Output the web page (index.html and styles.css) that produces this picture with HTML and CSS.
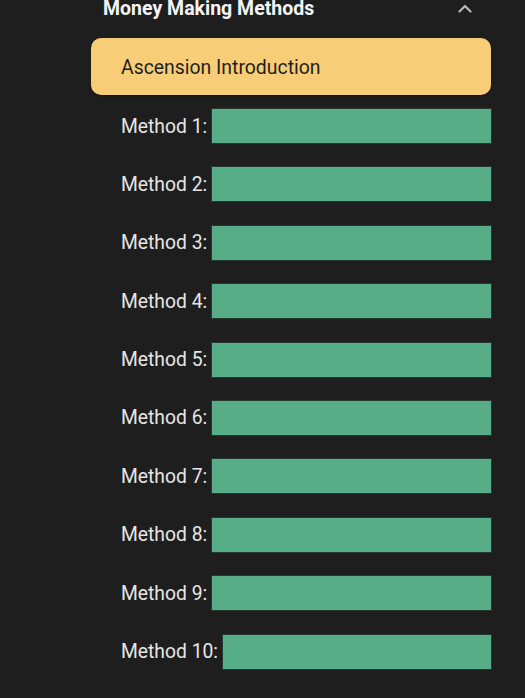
FILE: index.html
```html
<!DOCTYPE html>
<html>
<head>
<meta charset="utf-8">
<link rel="stylesheet" href="styles.css">
</head>
<body>
<div class="panel">
  <div class="header">
    <span class="title">Money Making Methods</span>
    <svg class="chev" width="14" height="9" viewBox="0 0 14 9"><path d="M1.5 7.5 L7 2 L12.5 7.5" fill="none" stroke="#b8b8b8" stroke-width="2.2" stroke-linecap="round" stroke-linejoin="round"/></svg>
  </div>
  <div class="intro">Ascension Introduction</div>
  <div class="list">
    <div class="row"><span class="label">Method 1:</span><div class="bar"></div></div>
    <div class="row"><span class="label">Method 2:</span><div class="bar"></div></div>
    <div class="row"><span class="label">Method 3:</span><div class="bar"></div></div>
    <div class="row"><span class="label">Method 4:</span><div class="bar"></div></div>
    <div class="row"><span class="label">Method 5:</span><div class="bar"></div></div>
    <div class="row"><span class="label">Method 6:</span><div class="bar"></div></div>
    <div class="row"><span class="label">Method 7:</span><div class="bar"></div></div>
    <div class="row"><span class="label">Method 8:</span><div class="bar"></div></div>
    <div class="row"><span class="label">Method 9:</span><div class="bar"></div></div>
    <div class="row"><span class="label">Method 10:</span><div class="bar"></div></div>
  </div>
</div>
</body>
</html>
```
FILE: styles.css
```css
html, body {
  margin: 0;
  padding: 0;
  background: #1e1e1e;
}
body {
  font-family: Roboto, "Liberation Sans", sans-serif;
  width: 525px;
  height: 698px;
  overflow: hidden;
}
.panel {
  padding-left: 91px;
  padding-right: 34px;
}
.header {
  height: 18px;
  display: flex;
  align-items: center;
  justify-content: space-between;
  padding-left: 12px;
  padding-right: 19px;
}
.title {
  color: #f4f4f4;
  font-weight: 700;
  font-size: 19.5px;
  line-height: 18px;
}
.chev {
  display: block;
  margin-top: -2px;
}
.intro {
  margin-top: 20px;
  height: 57px;
  box-sizing: border-box;
  background: #f8cd77;
  border-radius: 10px;
  color: #1f1f1f;
  font-size: 19.4px;
  display: flex;
  align-items: center;
  padding-left: 30px;
  padding-top: 2px;
  box-shadow: 0 1px 2px rgba(0,0,0,0.5);
}
.list {
  margin-top: 14px;
  display: flex;
  flex-direction: column;
  gap: 24.4px;
}
.row {
  display: flex;
  align-items: center;
  height: 34px;
  padding-left: 30px;
}
.label {
  color: #e6e6e6;
  font-size: 19.3px;
  white-space: nowrap;
  margin-right: 5px;
}
.bar {
  flex: 1;
  height: 34px;
  background: #56ad88;
  box-shadow: 0 0 0 1px #243a30;
}
```
